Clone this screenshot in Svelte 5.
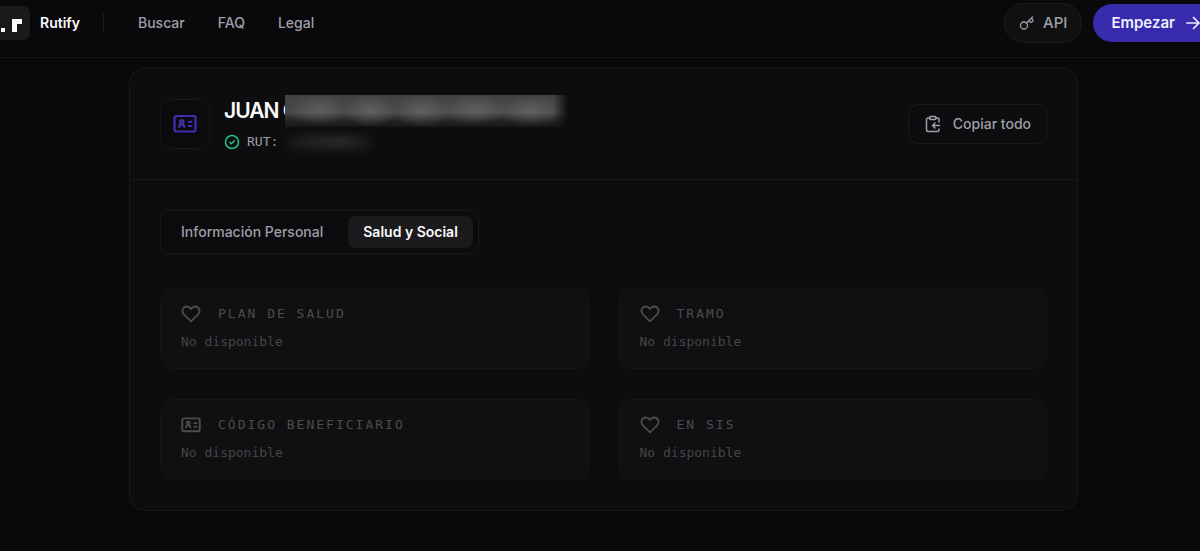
<script>
  let active = $state('salud');
  const tabs = [
    { id: 'personal', label: 'Información Personal' },
    { id: 'salud', label: 'Salud y Social' }
  ];
  const fields = [
    { label: 'Plan de salud', icon: 'heart' },
    { label: 'Tramo', icon: 'heart' },
    { label: 'Código beneficiario', icon: 'card' },
    { label: 'En SIS', icon: 'heart' }
  ];
</script>

{#snippet cardIcon(size)}
  <svg width={size} height={size} viewBox="0 0 24 24" fill="none" stroke="currentColor" stroke-width="2.2" stroke-linecap="round" stroke-linejoin="round" aria-hidden="true">
    <rect x="1.500" y="4" width="21" height="15.500" rx="2" />
    <circle cx="8.700" cy="9.800" r="1.700" />
    <path d="M6 15c.3-1.700 1.300-2.600 2.700-2.600s2.400.9 2.700 2.600M16 9.800h2.500M16 14h2.500" />
  </svg>
{/snippet}

<div class="page">
  <header class="topbar">
    <a class="brand" href="#inicio">
      <svg class="mark" width="34" height="34" viewBox="0 0 34 34" aria-hidden="true">
        <rect width="34" height="34" rx="7" fill="#1b1b1d" />
        <rect x="5" y="22" width="4" height="4" fill="#fff" />
        <rect x="16" y="13" width="5" height="13" fill="#fff" />
        <rect x="16" y="13" width="10" height="5" fill="#fff" />
      </svg>
      <span>Rutify</span>
    </a>
    <span class="divider"></span>
    <nav>
      <a href="#buscar">Buscar</a>
      <a href="#faq">FAQ</a>
      <a href="#legal">Legal</a>
    </nav>
    <div class="actions">
      <a class="api" href="#api">
        <svg width="16" height="16" viewBox="0 0 16 16" fill="none" stroke="currentColor" stroke-width="1.300" stroke-linecap="round" stroke-linejoin="round" aria-hidden="true">
          <circle cx="5" cy="10.500" r="3.500" />
          <path d="M7.500 8 13.500 2M10 5.500l1.300 1.600c.5.5 1 .5 1.500 0l1-1c.5-.5.5-1 0-1.500L12.200 3.300" />
        </svg>
        API
      </a>
      <button class="start" type="button">
        Empezar
        <svg width="16" height="16" viewBox="0 0 16 16" fill="none" stroke="currentColor" stroke-width="1.700" stroke-linecap="round" stroke-linejoin="round" aria-hidden="true">
          <path d="M2 8h12M8.500 2.500 14 8l-5.500 5.500" />
        </svg>
      </button>
    </div>
  </header>

  <main>
    <section class="card">
      <div class="card-head">
        <div class="avatar">{@render cardIcon(24)}</div>
        <div class="person">
          <h1>JUAN C<span class="veil"></span></h1>
          <p class="rut">
            <svg width="16" height="16" viewBox="0 0 16 16" fill="none" stroke="#22c58b" stroke-width="1.500" stroke-linecap="round" stroke-linejoin="round" aria-hidden="true">
              <circle cx="8" cy="8" r="6.500" />
              <path d="m5.800 8.200 1.500 1.500 3-3" />
            </svg>
            RUT:
            <span class="smudge"></span>
          </p>
        </div>
        <button class="copy" type="button">
          <svg width="18" height="18" viewBox="0 0 18 18" fill="none" stroke="currentColor" stroke-width="1.500" stroke-linecap="round" stroke-linejoin="round" aria-hidden="true">
            <rect x="5.500" y="1.500" width="6.500" height="3" rx="1.200" />
            <path d="M5.500 3H4a1.500 1.500 0 0 0-1.500 1.500v10.500A1.500 1.500 0 0 0 4 16.500h9.500a1.500 1.500 0 0 0 1.500-1.500v-1M12 3h1.500A1.500 1.500 0 0 1 15 4.500V7M15.500 10.500H8.500M11 8l-2.500 2.500L11 13" />
          </svg>
          Copiar todo
        </button>
      </div>

      <div class="card-body">
        <div class="tabs" role="tablist">
          {#each tabs as tab}
            <button type="button" role="tab" aria-selected={active === tab.id} class:active={active === tab.id} onclick={() => (active = tab.id)}>{tab.label}</button>
          {/each}
        </div>

        <div class="grid">
          {#each fields as field}
            <article class="field">
              <h2>
                {#if field.icon === 'heart'}
                  <svg width="20" height="20" viewBox="0 0 20 20" fill="none" stroke="currentColor" stroke-width="1.800" stroke-linejoin="round" aria-hidden="true">
                    <path d="M10 17.300 3.100 10.700C-.2 7.300 2 2.500 5.800 2.500c1.800 0 3.200.9 4.200 2.500 1-1.600 2.400-2.500 4.200-2.500 3.800 0 6 4.800 2.700 8.200Z" />
                  </svg>
                {:else}
                  {@render cardIcon(20)}
                {/if}
                <span>{field.label}</span>
              </h2>
              <p>No disponible</p>
            </article>
          {/each}
        </div>
      </div>
    </section>
  </main>
</div>

<style>
  :global(body) {
    margin: 0;
    background: #09090b;
    overflow-x: hidden;
  }
  .page {
    min-height: 100vh;
    overflow: hidden;
    background: #09090b;
    color: #fafafa;
    font-family: Inter, "Liberation Sans", sans-serif;
    font-size: 15px;
    line-height: 20px;
  }
  .page * {
    box-sizing: border-box;
  }
  a {
    color: inherit;
    text-decoration: none;
  }
  button {
    font: inherit;
    color: inherit;
    border: 0;
    background: none;
    cursor: pointer;
  }
  svg {
    flex: none;
  }
  h1, h2, p {
    margin: 0;
  }
  .topbar {
    display: flex;
    align-items: center;
    height: 58px;
    padding-bottom: 12px;
    border-bottom: 1px solid #151517;
  }
  .brand {
    display: flex;
    align-items: center;
    gap: 10px;
    margin-left: -4px;
    font-weight: 600;
    font-size: 14px;
  }
  .divider {
    width: 1px;
    height: 20px;
    margin: 0 34px 0 23px;
    background: #1c1c1f;
  }
  nav {
    display: flex;
    gap: 33px;
    color: #9f9fa9;
    font-size: 14px;
    font-weight: 500;
  }
  .actions {
    display: flex;
    align-items: center;
    gap: 11px;
    margin: 0 -19px 0 auto;
  }
  .api {
    display: flex;
    align-items: center;
    gap: 8px;
    height: 40px;
    padding: 0 14px;
    border: 1px solid #1c1c1f;
    border-radius: 20px;
    background: #101012;
    color: #9f9fa9;
    font-weight: 500;
  }
  .start {
    display: flex;
    align-items: center;
    gap: 10px;
    height: 38px;
    padding: 0 18px;
    border-radius: 20px;
    background: #372aac;
    color: #eef0ff;
    font-size: 15px;
    font-weight: 600;
  }
  main {
    padding: 9px 0 40px 7px;
  }
  .card {
    max-width: 949px;
    margin: 0 auto;
    border: 1px solid #18181a;
    border-radius: 16px;
    background: #0d0d0f;
  }
  .card-head {
    display: flex;
    align-items: center;
    gap: 14px;
    height: 112px;
    padding: 0 30px;
    border-bottom: 1px solid #18181a;
  }
  .avatar {
    display: grid;
    place-items: center;
    width: 50px;
    height: 50px;
    border: 1px solid #18181b;
    border-radius: 12px;
    background: #0b0b0d;
    color: #3f2fb0;
  }
  .person {
    flex: 1;
  }
  h1 {
    position: relative;
    font-size: 21px;
    line-height: 32px;
    font-weight: 600;
    letter-spacing: -1px;
  }
  .veil {
    position: absolute;
    left: 61px;
    top: 0;
    width: 286px;
    height: 32px;
    background:
      radial-gradient(30px 15px at 34px 15px, #6d6d6d99, transparent),
      radial-gradient(28px 16px at 85px 16px, #70707099, transparent),
      radial-gradient(30px 16px at 137px 16px, #70707099, transparent),
      radial-gradient(34px 15px at 190px 15px, #70707099, transparent),
      radial-gradient(32px 15px at 245px 16px, #72727299, transparent),
      linear-gradient(#424243, #48484a 55%, #242426 80%, #171719);
    mask-image: linear-gradient(90deg, #000 94%, transparent 99%);
  }
  .rut {
    display: flex;
    align-items: center;
    gap: 7px;
    margin-top: 5px;
    color: #9f9fa9;
    font-family: "DejaVu Sans Mono", monospace;
    font-size: 13px;
    line-height: 20px;
  }
  .smudge {
    width: 88px;
    height: 14px;
    border-radius: 8px;
    background: linear-gradient(90deg, #151517, #252528 35%, #29292c 65%, #151517);
    filter: blur(4px);
  }
  .copy {
    display: flex;
    align-items: center;
    gap: 11px;
    height: 40px;
    padding: 0 15px;
    border: 1px solid #1b1b1e;
    border-radius: 10px;
    color: #9f9fa9;
    font-size: 14px;
    font-weight: 500;
  }
  .card-body {
    padding: 30px;
  }
  .tabs {
    display: inline-flex;
    gap: 10px;
    height: 44px;
    padding: 5px;
    border: 1px solid #18181b;
    border-radius: 10px;
    background: #0b0b0d;
  }
  .tabs button {
    height: 32px;
    padding: 0 15px;
    border-radius: 8px;
    color: #9f9fa9;
    font-size: 14px;
    font-weight: 500;
  }
  .tabs .active {
    background: #1b1b1d;
    color: #fafafa;
    font-weight: 600;
  }
  .grid {
    display: grid;
    grid-template-columns: 1fr 1fr;
    gap: 30px;
    margin-top: 34px;
  }
  .field {
    height: 81px;
    padding: 15px 20px;
    border: 1px solid #151517;
    border-radius: 12px;
    background: #101012;
    color: #4c4c4f;
    font-family: "DejaVu Sans Mono", monospace;
    font-size: 13px;
  }
  h2 {
    display: flex;
    align-items: center;
    gap: 17px;
    font-size: 13px;
    line-height: 20px;
    font-weight: 400;
    letter-spacing: 2px;
    text-transform: uppercase;
  }
  .field p {
    margin-top: 8px;
    color: #454548;
  }
</style>
